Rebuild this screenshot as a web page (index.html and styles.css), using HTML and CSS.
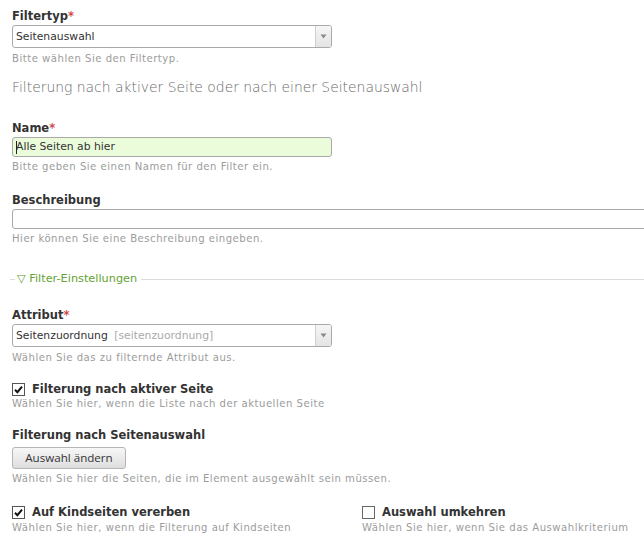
FILE: index.html
```html
<!DOCTYPE html>
<html lang="de">
<head>
<meta charset="utf-8">
<title>Filter</title>
<link rel="stylesheet" href="styles.css">
</head>
<body>
<div class="page">
  <div class="field">
    <div class="label">Filtertyp<span class="req">*</span></div>
    <div class="select">
      <span class="select-text">Seitenauswahl</span>
      <span class="select-arrow"><svg width="7" height="5" viewBox="0 0 7 5"><path d="M0.5 0.5 L6.5 0.5 L3.5 4.5 Z" fill="#8a8a8a"/></svg></span>
    </div>
    <div class="help help-select">Bitte wählen Sie den Filtertyp.</div>
  </div>

  <p class="intro">Filterung nach aktiver Seite oder nach einer Seitenauswahl</p>

  <div class="field field-name">
    <div class="label">Name<span class="req">*</span></div>
    <div class="input input-active"><span class="caret"></span>Alle Seiten ab hier</div>
    <div class="help">Bitte geben Sie einen Namen für den Filter ein.</div>
  </div>

  <div class="field field-desc">
    <div class="label">Beschreibung</div>
    <div class="input input-wide"></div>
    <div class="help">Hier können Sie eine Beschreibung eingeben.</div>
  </div>

  <div class="section-head">
    <span class="section-title">▽ Filter-Einstellungen</span>
  </div>

  <div class="field field-attr">
    <div class="label">Attribut<span class="req">*</span></div>
    <div class="select">
      <span class="select-text">Seitenzuordnung <span class="muted">[seitenzuordnung]</span></span>
      <span class="select-arrow"><svg width="7" height="5" viewBox="0 0 7 5"><path d="M0.5 0.5 L6.5 0.5 L3.5 4.5 Z" fill="#8a8a8a"/></svg></span>
    </div>
    <div class="help help-select">Wählen Sie das zu filternde Attribut aus.</div>
  </div>

  <div class="field field-check">
    <div class="check-label">
      <span class="checkbox"><svg width="13" height="13" viewBox="0 0 13 13"><rect x="0.5" y="0.5" width="12" height="12" fill="#fff" stroke="#555"/><path d="M3 6.8 L5.4 9.2 L10 3.6" fill="none" stroke="#111" stroke-width="2"/></svg></span>
      Filterung nach aktiver Seite
    </div>
    <div class="help help-tight">Wählen Sie hier, wenn die Liste nach der aktuellen Seite</div>
  </div>

  <div class="field field-pages">
    <div class="label">Filterung nach Seitenauswahl</div>
    <div class="button">Auswahl ändern</div>
    <div class="help help-button">Wählen Sie hier die Seiten, die im Element ausgewählt sein müssen.</div>
  </div>

  <div class="field-row">
    <div class="col">
      <div class="check-label">
        <span class="checkbox"><svg width="13" height="13" viewBox="0 0 13 13"><rect x="0.5" y="0.5" width="12" height="12" fill="#fff" stroke="#555"/><path d="M3 6.8 L5.4 9.2 L10 3.6" fill="none" stroke="#111" stroke-width="2"/></svg></span>
        Auf Kindseiten vererben
      </div>
      <div class="help help-row">Wählen Sie hier, wenn die Filterung auf Kindseiten</div>
    </div>
    <div class="col">
      <div class="check-label">
        <span class="checkbox"><svg width="13" height="13" viewBox="0 0 13 13"><rect x="0.5" y="0.5" width="12" height="12" fill="#fff" stroke="#666"/></svg></span>
        Auswahl umkehren
      </div>
      <div class="help help-row">Wählen Sie hier, wenn Sie das Auswahlkriterium</div>
    </div>
  </div>
</div>
</body>
</html>
```

FILE: styles.css
```css
html, body {
  margin: 0;
  padding: 0;
  background: #fff;
  overflow: hidden;
}

body {
  font-family: "DejaVu Sans", Verdana, sans-serif;
  color: #333;
}

.page {
  display: flex;
  flex-direction: column;
  align-items: flex-start;
  padding: 8px 0 0 12px;
  width: 632px;
}

.field {
  margin: 0;
}

.label {
  font-size: 11.5px;
  font-weight: bold;
  line-height: 16px;
  color: #333;
}

.req {
  color: #d24a4a;
  font-weight: bold;
}

.select {
  margin-top: 1px;
  width: 320px;
  height: 23px;
  box-sizing: border-box;
  border: 1px solid #a9a9a9;
  border-radius: 3px;
  display: flex;
  align-items: stretch;
  background: #fff;
  overflow: hidden;
}

.select-text {
  flex: 1;
  font-size: 10.8px;
  line-height: 21px;
  padding-left: 3px;
  color: #333;
  white-space: nowrap;
}

.muted {
  color: #aaa;
  margin-left: 3px;
}

.select-arrow {
  width: 15px;
  border-left: 1px solid #cfcfcf;
  background: linear-gradient(#f6f6f6, #e4e4e4);
  display: flex;
  align-items: center;
  justify-content: center;
}

.help {
  font-size: 10.1px;
  letter-spacing: 0.5px;
  line-height: 14px;
  color: #9c9c9c;
  margin-top: 3px;
  white-space: nowrap;
}

.help-select {
  margin-top: 4px;
}

.help-tight {
  margin-top: 0;
}

.help-row {
  margin-top: 1px;
}

.help-button {
  margin-top: 3px;
}

.intro {
  margin: 12px 0 0 0;
  font-size: 13.9px;
  font-weight: 200;
  line-height: 18px;
  color: #6a6a6a;
}

.field-name {
  margin-top: 24px;
}

.field-desc {
  margin-top: 18px;
}

.input {
  margin-top: 1px;
  width: 320px;
  height: 20px;
  box-sizing: border-box;
  border: 1px solid #a9a9a9;
  border-radius: 3px;
  font-size: 10.8px;
  line-height: 18px;
  padding-left: 3px;
  color: #333;
  background: #fff;
  display: flex;
  align-items: center;
}

.input-active {
  background: #ebfcdb;
}

.caret {
  width: 1px;
  height: 13px;
  background: #222;
  margin-right: -1px;
}

.input-wide {
  width: 660px;
}

.section-head {
  align-self: stretch;
  display: flex;
  align-items: center;
  height: 16px;
  margin: 25px 0 0 -2px;
}

.section-head::before {
  content: "";
  width: 5px;
  border-top: 1px solid #dcdcdc;
}

.section-head::after {
  content: "";
  flex: 1;
  border-top: 1px solid #dcdcdc;
}

.section-title {
  font-size: 11.3px;
  color: #63a234;
  padding: 0 4px 0 2px;
  line-height: 16px;
}

.field-attr {
  margin-top: 20px;
}

.field-check {
  margin-top: 16px;
}

.check-label {
  display: flex;
  align-items: flex-start;
  gap: 7px;
  font-size: 11.5px;
  font-weight: bold;
  line-height: 16px;
  color: #333;
}

.checkbox {
  display: flex;
  width: 13px;
  height: 13px;
  margin-top: 2px;
}

.field-pages {
  margin-top: 16px;
}

.button {
  margin-top: 4px;
  width: 114px;
  height: 22px;
  box-sizing: border-box;
  border: 1px solid #b5b5b5;
  border-radius: 3px;
  background: linear-gradient(#f7f7f7, #dedede);
  font-family: "Open Sans", "DejaVu Sans", sans-serif;
  font-size: 11.6px;
  line-height: 20px;
  text-align: center;
  color: #333;
}

.field-row {
  margin-top: 18px;
  align-self: stretch;
  display: grid;
  grid-template-columns: 350px 1fr;
}
```
